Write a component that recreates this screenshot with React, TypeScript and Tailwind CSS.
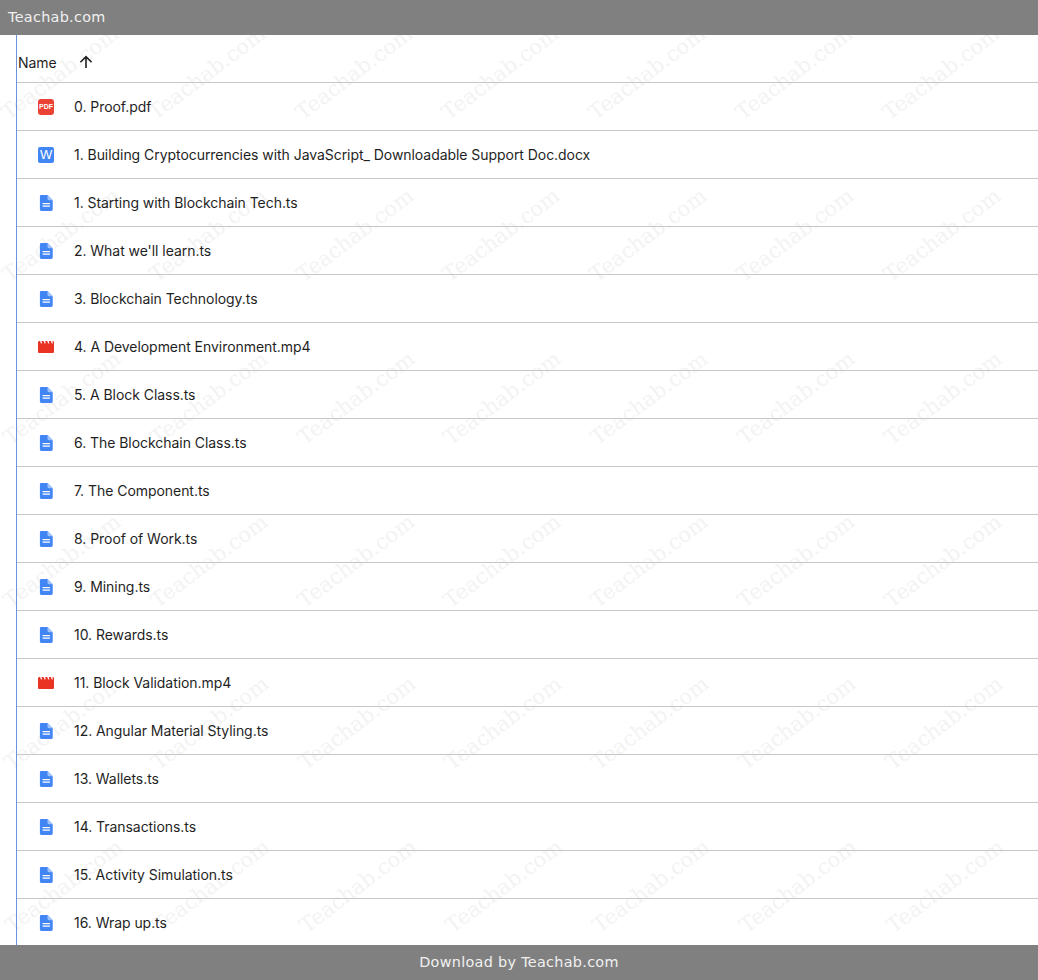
const files: [string, "pdf" | "word" | "doc" | "video"][] = [
  ["0. Proof.pdf", "pdf"],
  ["1. Building Cryptocurrencies with JavaScript_ Downloadable Support Doc.docx", "word"],
  ["1. Starting with Blockchain Tech.ts", "doc"],
  ["2. What we'll learn.ts", "doc"],
  ["3. Blockchain Technology.ts", "doc"],
  ["4. A Development Environment.mp4", "video"],
  ["5. A Block Class.ts", "doc"],
  ["6. The Blockchain Class.ts", "doc"],
  ["7. The Component.ts", "doc"],
  ["8. Proof of Work.ts", "doc"],
  ["9. Mining.ts", "doc"],
  ["10. Rewards.ts", "doc"],
  ["11. Block Validation.mp4", "video"],
  ["12. Angular Material Styling.ts", "doc"],
  ["13. Wallets.ts", "doc"],
  ["14. Transactions.ts", "doc"],
  ["15. Activity Simulation.ts", "doc"],
  ["16. Wrap up.ts", "doc"],
];

function FileIcon({ kind }: { kind: string }) {
  if (kind === "pdf")
    return (
      <div className="flex h-4 w-4 items-center justify-center rounded-[3px] bg-[#ea4335] font-['Liberation_Sans',sans-serif] text-[7px] leading-none font-bold text-white">
        PDF
      </div>
    );
  if (kind === "word")
    return (
      <div className="flex h-4 w-4 items-center justify-center rounded-[2px] bg-[#4285f4] font-['Liberation_Sans',sans-serif] text-[13px] leading-none text-white">
        W
      </div>
    );
  if (kind === "video")
    return (
      <svg width="16" height="16" viewBox="0 0 16 16">
        <path
          d="M0 3.5C0 3 .4 2 1 2h1l1 2.5h1L3.6 2h2l1 2.5h1L7.2 2h2l1 2.5h1L10.8 2h2l1 2.5h1L14.4 2h.6c.6 0 1 1 1 1.5V13a1 1 0 0 1-1 1H1a1 1 0 0 1-1-1z"
          fill="#ea3323"
        />
      </svg>
    );
  return (
    <svg width="16" height="16" viewBox="0 0 16 16">
      <path
        d="M3.3 0h6.2L14.7 5.2V14.6A1.4 1.4 0 0 1 13.3 16H3.3A1.4 1.4 0 0 1 1.9 14.6V1.4A1.4 1.4 0 0 1 3.3 0z"
        fill="#4285f4"
      />
      <path d="M9.5 0v3.8c0 .8.6 1.4 1.4 1.4h3.8z" fill="#a1c2fa" />
      <path d="M4.6 8h7.4v1.3H4.6zM4.6 10.5h7.4v1.3H4.6z" fill="#fff" />
    </svg>
  );
}

const columns = [11, 158, 305, 451, 598, 745, 892];
const rows = [88, 250, 413, 576, 738, 901];

function Watermarks() {
  return (
    <div className="pointer-events-none absolute inset-0 overflow-hidden">
      {rows.flatMap((y, r) =>
        columns.map((x) => (
          <span
            key={`${r}-${x}`}
            className="absolute origin-bottom-left font-['DejaVu_Serif',serif] text-[21px] leading-none whitespace-nowrap text-[#f3f3f3]"
            style={{
              left: x + r * 0.8,
              top: y - 20,
              transform: "rotate(-37deg)",
            }}
          >
            Teachab.com
          </span>
        ))
      )}
    </div>
  );
}

export default function App() {
  return (
    <div className="relative flex h-[980px] w-[1038px] flex-col overflow-hidden bg-white">
      <div className="z-10 flex h-[35px] shrink-0 items-center bg-[#808080] pl-2 font-['DejaVu_Sans',sans-serif] text-[14.4px] tracking-[0.3px] text-[#f0f0f0]">
        Teachab.com
      </div>
      <div className="relative min-h-0 flex-1">
        <Watermarks />
        <div className="relative ml-4 h-full overflow-hidden border-l border-l-[#6a93dc] font-['Inter',sans-serif] text-[14px] tracking-[-0.05px] text-[#1f1f1f]">
          <div className="flex h-[48px] items-center border-b border-b-[#c7c7c7] pt-[7px] pl-[1px]">
            <span className="w-[60px]">Name</span>
            <svg width="16" height="16" viewBox="0 0 16 16" className="mb-[1px]">
              <path
                d="M8 14V2.6M2.4 8.2 8 2.6l5.6 5.6"
                fill="none"
                stroke="#1f1f1f"
                strokeWidth="1.6"
              />
            </svg>
          </div>
          {files.map(([name, kind]) => (
            <div key={name} className="flex h-[48px] items-center border-b border-b-[#c7c7c7]">
              <div className="ml-[21px] w-[36px] shrink-0">
                <FileIcon kind={kind} />
              </div>
              <span className="whitespace-nowrap">{name}</span>
            </div>
          ))}
        </div>
      </div>
      <div className="z-10 flex h-[35px] shrink-0 items-center justify-center bg-[#808080] font-['DejaVu_Sans',sans-serif] text-[14.4px] tracking-[0.3px] text-[#f0f0f0]">
        Download by Teachab.com
      </div>
    </div>
  );
}
